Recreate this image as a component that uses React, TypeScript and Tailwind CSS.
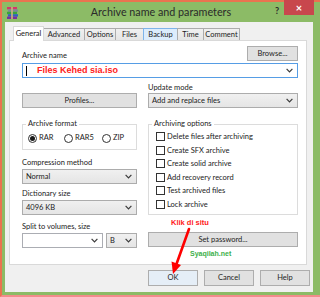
import type { ReactNode } from 'react';

const tabs = [
  { label: 'General', w: 'w-[31px]', state: 'active' },
  { label: 'Advanced', w: 'w-[42px]', state: '' },
  { label: 'Options', w: 'w-[32px]', state: '' },
  { label: 'Files', w: 'w-[29px]', state: '' },
  { label: 'Backup', w: 'w-[35px]', state: 'hover' },
  { label: 'Time', w: 'w-[27px]', state: '' },
  { label: 'Comment', w: 'w-[37px]', state: '' },
];

const options = [
  'Delete files after archiving',
  'Create SFX archive',
  'Create solid archive',
  'Add recovery record',
  'Test archived files',
  'Lock archive',
];

function Chevron() {
  return (
    <svg width="7" height="5" viewBox="0 0 7 5" className="shrink-0">
      <path d="M0.6 0.8 L3.5 3.8 L6.4 0.8" fill="none" stroke="#3a3a3a" strokeWidth="1.2" />
    </svg>
  );
}

function Button({ children, className = '' }: { children: ReactNode; className?: string }) {
  return (
    <div
      className={`flex h-[15px] items-center justify-center border border-[#adadad] bg-[#e1e1e1] text-[#1e1e1e] ${className}`}
    >
      {children}
    </div>
  );
}

function Select({ value, className = '', white = false }: { value: string; className?: string; white?: boolean }) {
  return (
    <div
      className={`flex h-[15px] items-center justify-between border pl-[3px] pr-[4px] ${
        white ? 'border-[#abadb3] bg-white' : 'border-[#acacac] bg-gradient-to-b from-[#f0f0f0] to-[#e5e5e5]'
      } ${className}`}
    >
      <span>{value}</span>
      <Chevron />
    </div>
  );
}

function Label({ children, className = '' }: { children: ReactNode; className?: string }) {
  return <div className={`h-[10px] leading-[10px] ${className}`}>{children}</div>;
}

function Radio({ label, checked = false, className = '' }: { label: string; checked?: boolean; className?: string }) {
  return (
    <div className={`flex items-center gap-[2px] ${className}`}>
      <span className="flex h-[9px] w-[9px] items-center justify-center rounded-full border border-[#333] bg-white">
        {checked && <span className="h-[5px] w-[5px] rounded-full bg-[#1a1a1a]" />}
      </span>
      <span>{label}</span>
    </div>
  );
}

function WinRarIcon() {
  return (
    <svg width="11" height="12" viewBox="0 0 11 12">
      <rect x="0" y="0" width="10" height="2.4" fill="#d2386a" />
      <rect x="1" y="2.4" width="10" height="2.4" fill="#7c8a9a" />
      <rect x="0" y="4.8" width="10" height="2.4" fill="#3aa33a" />
      <rect x="1" y="7.2" width="10" height="2.4" fill="#2f5fc4" />
      <rect x="0" y="9.6" width="10" height="2.4" fill="#7a2f9c" />
      <rect x="4" y="0" width="2" height="12" fill="#c9b27a" opacity="0.85" />
    </svg>
  );
}

export default function App() {
  return (
    <div className="relative h-[297px] w-[320px] overflow-hidden font-['Lato','Liberation_Sans',sans-serif] text-[7.5px] text-[#222]">
      <div className="flex h-full w-full flex-col border-l-2 border-t-2 border-b-2 border-[#ea7350] border-b-[#f28b8b] bg-[#8cbb66]">
        {/* title bar */}
        <div className="flex h-[20px] items-start">
          <div className="w-[50px] pl-[5px] pt-[5px]">
            <WinRarIcon />
          </div>
          <div className="flex-1 text-center text-[10.75px] leading-[19px] text-[#2a2a2a]">
            Archive name and parameters
          </div>
          <div className="flex w-[50px] items-start">
            <div className="w-[14px] text-center text-[9px] font-bold leading-[18px] text-[#2a2a2a]">?</div>
            <div className="-mt-[2px] flex h-[15px] w-[30px] items-center justify-center bg-[#c8474d] text-[11px] font-bold leading-none text-white">
              ×
            </div>
          </div>
        </div>

        {/* client area */}
        <div className="ml-[3px] h-[270px] w-[308px] bg-[#f0f0f0] pl-[4px] pt-[4px]">
          <div className="ml-[4px] flex h-[14px] items-end">
            {tabs.map((t, i) => (
              <div
                key={t.label}
                className={`${t.w} ${i > 0 ? '-ml-px' : ''} flex items-center justify-center border border-b-0 ${
                  t.state === 'active'
                    ? 'relative z-10 -mb-px h-[15px] border-[#d9d9d9] bg-white'
                    : t.state === 'hover'
                      ? 'h-[12px] border-[#7eb4ea] bg-[#dcecfc]'
                      : 'h-[12px] border-[#acacac] bg-gradient-to-b from-[#f0f0f0] to-[#e5e5e5]'
                }`}
              >
                {t.label}
              </div>
            ))}
          </div>

          {/* tab panel */}
          <div className="h-[225px] w-[298px] border border-[#d9d9d9] bg-white pl-[12px] pr-[8px] pt-[5px]">
            <div className="flex items-end justify-between">
              <Label>Archive name</Label>
              <Button className="w-[51px]">Browse...</Button>
            </div>
            <div className="mt-[2px] flex h-[15px] items-center justify-between border border-[#569de5] bg-white pl-[3px] pr-[4px]">
              <div className="flex items-center">
                <span className="h-[10px] w-px bg-black" />
                <span className="ml-[10px] font-['Liberation_Sans',sans-serif] text-[9px] font-bold text-[#ff2020]">
                  Files Kehed sia.iso
                </span>
              </div>
              <Chevron />
            </div>

            <div className="flex gap-[11px]">
              {/* left column */}
              <div className="w-[115px]">
                <Button className="mt-[15px]">Profiles...</Button>
                <fieldset className="mt-[11px] border border-[#dcdcdc] pb-[6px]">
                  <legend className="ml-[3px] px-[2px] leading-[10px]">Archive format</legend>
                  <div className="mt-[4px] flex h-[10px] items-center pl-[5px]">
                    <Radio label="RAR" checked className="w-[36px]" />
                    <Radio label="RAR5" className="w-[38px]" />
                    <Radio label="ZIP" />
                  </div>
                </fieldset>
                <Label className="mt-[8px]">Compression method</Label>
                <Select value="Normal" className="mt-[1px]" />
                <Label className="mt-[5px]">Dictionary size</Label>
                <Select value="4096 KB" className="mt-[1px]" />
                <Label className="mt-[7px]">Split to volumes, size</Label>
                <div className="mt-[1px] flex gap-[3px]">
                  <Select value="" white className="w-[81px]" />
                  <Select value="B" className="w-[31px]" />
                </div>
              </div>

              {/* right column */}
              <div className="w-[150px]">
                <Label className="mt-[5px]">Update mode</Label>
                <Select value="Add and replace files" />
                <fieldset className="mt-[11px] border border-[#dcdcdc] pb-[3px]">
                  <legend className="ml-[3px] px-[2px] leading-[10px]">Archiving options</legend>
                  <div className="mt-[1px]">
                    {options.map((o) => (
                      <div key={o} className="flex h-[13.5px] items-center gap-[2px] pl-[7px]">
                        <span className="h-[9px] w-[9px] border border-[#333] bg-white" />
                        <span>{o}</span>
                      </div>
                    ))}
                  </div>
                </fieldset>
                <div className="mt-[3px] pl-[23px] font-['Liberation_Sans',sans-serif] text-[7.5px] font-bold leading-[10px] text-[#ff1a1a]">
                  Klik di situ
                </div>
                <Button className="mt-[4px]">Set password...</Button>
                <div className="mt-[2px] pl-[42px] font-['Liberation_Sans',sans-serif] text-[7px] font-bold leading-[10px] text-[#3db04a]">
                  Syaqilah.net
                </div>
              </div>
            </div>
          </div>

          {/* dialog buttons */}
          <div className="ml-[139px] mt-[5px] flex gap-[6px]">
            <Button className="h-[16px] w-[50px] border-[#3c8fd9] bg-[#e5eef7]">OK</Button>
            <Button className="h-[16px] w-[50px]">Cancel</Button>
            <Button className="h-[16px] w-[50px]">Help</Button>
          </div>
        </div>
      </div>

      {/* annotation arrow */}
      <svg className="pointer-events-none absolute left-0 top-0" width="320" height="297" viewBox="0 0 320 297">
        <line x1="189" y1="229" x2="176.5" y2="264" stroke="#f00" strokeWidth="2.6" strokeLinecap="round" />
        <polygon points="173,274 181,265 171.5,261.5" fill="#f00" />
      </svg>
    </div>
  );
}
